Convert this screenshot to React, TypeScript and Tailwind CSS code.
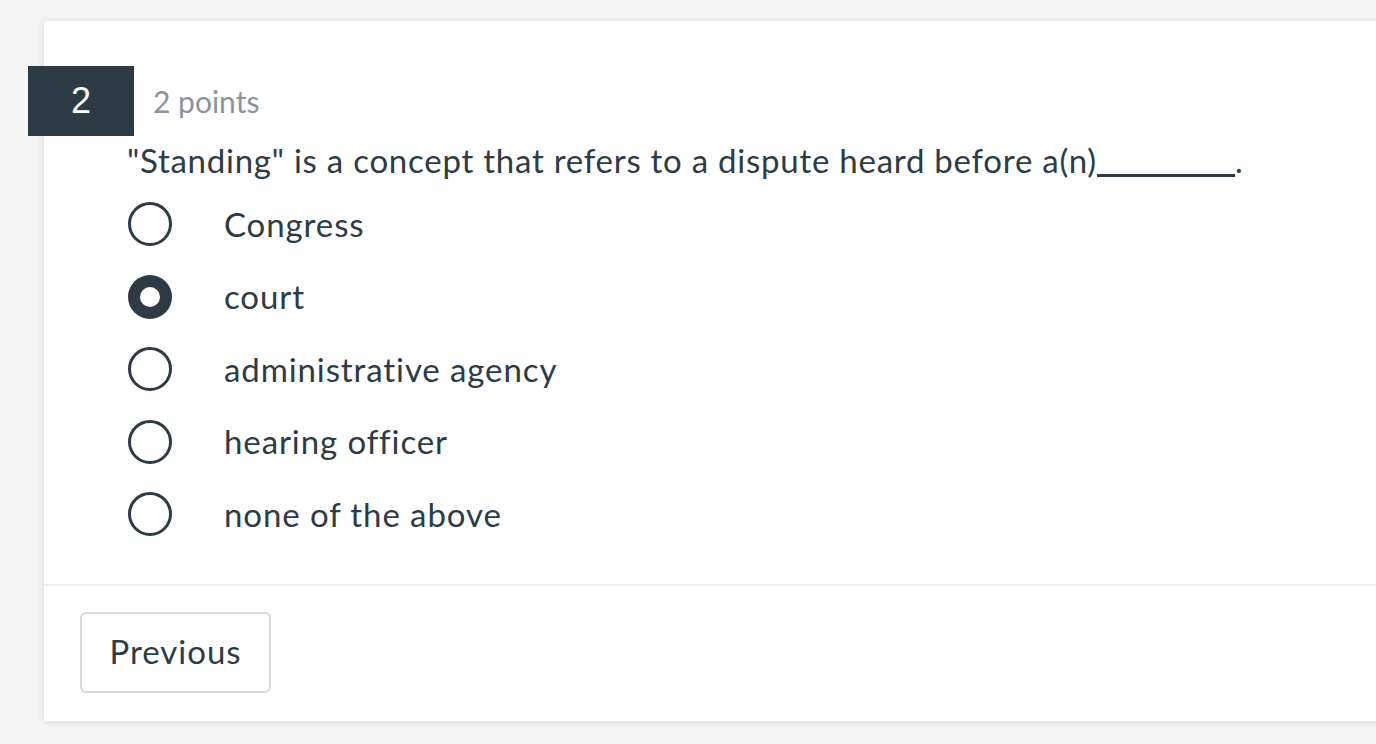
import React from "react";

const options = [
  "Congress",
  "court",
  "administrative agency",
  "hearing officer",
  "none of the above",
];

function Radio({ checked }: { checked: boolean }) {
  if (checked) {
    return (
      <span className="flex h-[44px] w-[44px] shrink-0 items-center justify-center rounded-full bg-[#2d3b45]">
        <span className="h-[20px] w-[20px] rounded-full bg-white" />
      </span>
    );
  }
  return (
    <span className="h-[44px] w-[44px] shrink-0 rounded-full border-[3px] border-[#2d3b45] bg-white" />
  );
}

export default function App() {
  const selected = 1;
  return (
    <div
      className="h-[744px] w-[1376px] overflow-hidden bg-[#f5f5f5] pt-[21px]"
      style={{ fontFamily: "Lato, 'Open Sans', sans-serif" }}
    >
      <div className="ml-[44px] w-[1380px] rounded-[3px] bg-white shadow-[0_1px_8px_rgba(0,0,0,0.12)]">
        <div className="pt-[45px]">
          <div className="flex items-center">
            <div
              className="-ml-[16px] flex h-[70px] w-[106px] items-center justify-center bg-[#2d3b45] text-[36px] text-white"
              style={{ fontFamily: "'Liberation Sans', Arial, sans-serif" }}
            >
              2
            </div>
            <div className="ml-[19px] text-[30px] text-[#8b949c]">2 points</div>
          </div>

          <div className="pl-[83px] pr-[40px] text-[#2d3b45]">
            <p className="h-[48px] text-[33px] leading-[48px] tracking-[0.75px]">
              "Standing" is a concept that refers to a dispute heard before a(n)
              <span className="inline-block w-[138px] translate-y-[4px] border-b-[3px] border-[#2d3b45] align-baseline" />
              .
            </p>
            <div className="mt-[4px]">
              {options.map((o, i) => (
                <label
                  key={o}
                  className="flex h-[72.5px] items-center gap-[52px] pl-[1px] text-[33px] tracking-[0.9px]"
                >
                  <Radio checked={i === selected} />
                  <span>{o}</span>
                </label>
              ))}
            </div>
          </div>
        </div>

        <div className="mt-[33px] border-t-2 border-[#f0f0f0] px-[36px] pb-[28px] pt-[26px]">
          <button className="flex h-[81px] w-[191px] items-center justify-center rounded-[6px] border-2 border-[#d9d9d9] bg-white text-[33px] tracking-[1px] text-[#2d3b45]">
            Previous
          </button>
        </div>
      </div>
    </div>
  );
}
